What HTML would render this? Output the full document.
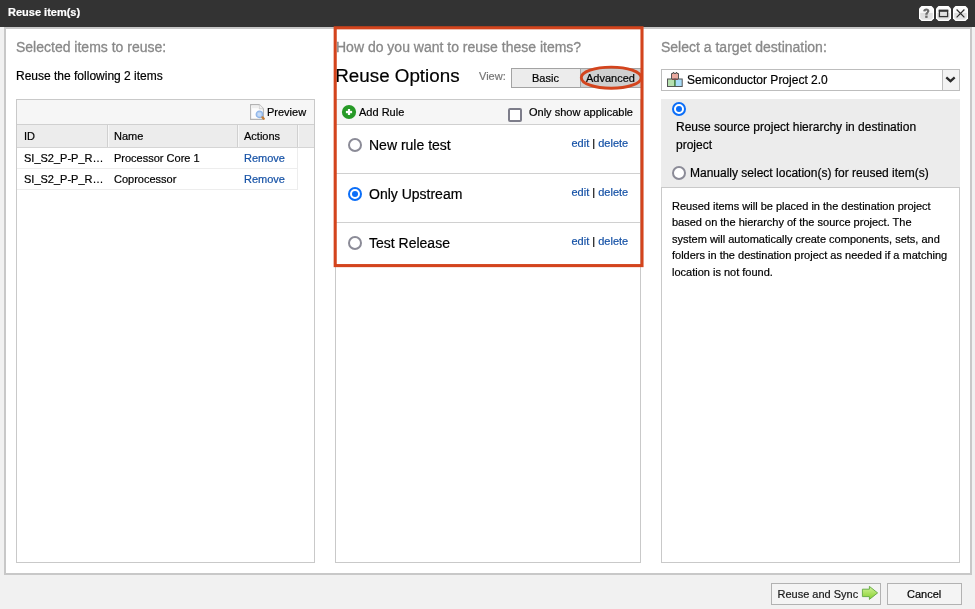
<!DOCTYPE html>
<html><head><meta charset="utf-8">
<style>
*{margin:0;padding:0;box-sizing:border-box}
html,body{-webkit-text-stroke:0.2px;width:975px;height:609px;overflow:hidden;-webkit-font-smoothing:antialiased;will-change:transform;background:#f1f1f1;font-family:"Liberation Sans",sans-serif;color:#000}
.a{position:absolute}
.t{position:absolute;white-space:nowrap;line-height:1}
#title{left:0;top:0;width:975px;height:27px;background:#333}
#outer{left:4px;top:27px;width:968px;height:548px;background:#fff;border:2px solid #c8c8c8}
.gray{color:#898989;-webkit-text-stroke:0.3px}
.panel{border:1px solid #c9c9c9;background:#fff}
.tb{background:#f6f6f6;border-bottom:1px solid #d0d0d0}
.lnk{color:#1652a6}
.radio{position:absolute;width:14px;height:14px;border-radius:50%;border:2px solid #8b8b97;background:#fff}
.radio.on{border:2px solid #0b6ef8}
.radio.on:after{content:"";position:absolute;left:2px;top:2px;width:6px;height:6px;border-radius:50%;background:#0b6ef8}
.tbtn{position:absolute;top:6px;width:15px;height:15px;background:linear-gradient(#fff 0,#fff 45%,#dcdcdc 55%,#e6e6e6 100%);border-radius:3px;border:1px solid #fff}
.btn{position:absolute;border:1px solid #b2b2b2;background:#f4f4f4}
</style></head><body>
<div id="title" class="a">
  <div class="t" style="left:8px;top:7px;font-size:11px;font-weight:bold;color:#fff">Reuse item(s)</div>
  <svg class="a" style="left:918px;top:5px" width="52" height="17" viewBox="0 0 52 17">
    <defs><linearGradient id="tg" x1="0" y1="0" x2="0" y2="1"><stop offset="0" stop-color="#fdfdfd"/><stop offset="0.42" stop-color="#f6f6f6"/><stop offset="0.5" stop-color="#dedede"/><stop offset="1" stop-color="#e4e4e4"/></linearGradient></defs>
    <g transform="translate(1,1)">
      <path d="M2.5 0H12.5L15 2.5V12.5L12.5 15H2.5L0 12.5V2.5Z" fill="#fff"/>
      <path d="M3 1.2H12L13.8 3V12L12 13.8H3L1.2 12V3Z" fill="url(#tg)"/>
      <path d="M4.2 5.3C4.2 3.4 5.7 2.5 7.3 2.5C9.1 2.5 10.4 3.5 10.4 5.1C10.4 6.9 8.6 7 8.6 8.8H6.2C6.2 6.3 8.1 6.2 8.1 5.2C8.1 4.7 7.8 4.4 7.3 4.4C6.8 4.4 6.5 4.8 6.5 5.5Z" fill="#6b6b6b"/>
      <rect x="6.2" y="9.6" width="2.4" height="2.3" fill="#6b6b6b"/>
    </g>
    <g transform="translate(18,1)">
      <path d="M2.5 0H12.5L15 2.5V12.5L12.5 15H2.5L0 12.5V2.5Z" fill="#fff"/>
      <path d="M3 1.2H12L13.8 3V12L12 13.8H3L1.2 12V3Z" fill="url(#tg)"/>
      <rect x="3.4" y="4.4" width="8.2" height="6.2" fill="#e0e0e0" stroke="#333" stroke-width="1.3"/>
      <rect x="2.8" y="3.8" width="9.4" height="2" fill="#333"/>
    </g>
    <g transform="translate(35,1)">
      <path d="M2.5 0H12.5L15 2.5V12.5L12.5 15H2.5L0 12.5V2.5Z" fill="#fff"/>
      <path d="M3 1.2H12L13.8 3V12L12 13.8H3L1.2 12V3Z" fill="url(#tg)"/>
      <path d="M3.6 3.5L11.4 11.3M11.4 3.5L3.6 11.3" stroke="#2a2a2a" stroke-width="1.2"/>
    </g>
  </svg>
</div>
<div id="outer" class="a"></div>

<!-- left column -->
<div class="t gray" style="left:16px;top:40px;font-size:14px">Selected items to reuse:</div>
<div class="t" style="left:16px;top:70px;font-size:12px">Reuse the following 2 items</div>
<div class="a panel" style="left:16px;top:99px;width:299px;height:464px">
  <div class="a tb" style="left:0;top:0;width:297px;height:25px"></div>
</div>
<div class="a" style="left:17px;top:125px;width:297px;height:23px;background:#ececec;border-bottom:1px solid #d5d5d5"></div>
<div class="a" style="left:107px;top:125px;width:1px;height:22px;background:#d0d0d0"></div>
<div class="a" style="left:237px;top:125px;width:1px;height:22px;background:#d0d0d0"></div>
<div class="a" style="left:297px;top:125px;width:1px;height:22px;background:#d0d0d0"></div>
<div class="a" style="left:108px;top:125px;width:1px;height:22px;background:#f7f7f7"></div>
<div class="a" style="left:238px;top:125px;width:1px;height:22px;background:#f7f7f7"></div>
<div class="a" style="left:298px;top:125px;width:1px;height:22px;background:#f7f7f7"></div>
<div class="t" style="left:24px;top:131px;font-size:11px">ID</div>
<div class="t" style="left:114px;top:131px;font-size:11px">Name</div>
<div class="t" style="left:244px;top:131px;font-size:11px">Actions</div>
<div class="a" style="left:17px;top:148px;width:281px;height:21px;border-bottom:1px solid #ededed;border-right:1px solid #ededed"></div>
<div class="a" style="left:17px;top:169px;width:281px;height:21px;border-bottom:1px solid #ededed;border-right:1px solid #ededed"></div>
<div class="t" style="left:24px;top:153px;font-size:11px">SI_S2_P-P_R…</div>
<div class="t" style="left:114px;top:153px;font-size:11px">Processor Core 1</div>
<div class="t lnk" style="left:244px;top:153px;font-size:11px">Remove</div>
<div class="t" style="left:24px;top:174px;font-size:11px">SI_S2_P-P_R…</div>
<div class="t" style="left:114px;top:174px;font-size:11px">Coprocessor</div>
<div class="t lnk" style="left:244px;top:174px;font-size:11px">Remove</div>
<svg class="a" style="left:249px;top:103px" width="17" height="18" viewBox="0 0 17 18"><path d="M1.6 1.6H10.2L14.4 5.8V16.4H1.6Z" fill="#fdfdfd" stroke="#b3b3b3" stroke-width="1.1"/><path d="M10.2 1.6V5.8H14.4" fill="#f0f0f0" stroke="#c8c8c8" stroke-width="0.8"/><rect x="3" y="3" width="6" height="2.2" fill="#eeeeee"/><circle cx="10.4" cy="11.4" r="3.2" fill="#b3cff3" stroke="#8fb5e8" stroke-width="1.2"/><rect x="9" y="10" width="2.8" height="2.8" fill="#c9dcf6"/><path d="M13.4 14.4L14.8 15.8" stroke="#c27c36" stroke-width="2.2" stroke-linecap="round"/></svg>
<div class="t" style="left:267px;top:107px;font-size:11px">Preview</div>

<!-- middle column -->
<div class="t gray" style="left:336px;top:40px;font-size:14px">How do you want to reuse these items?</div>
<div class="t" style="left:335.3px;top:66.6px;font-size:18.8px">Reuse Options</div>
<div class="t" style="left:479px;top:71px;font-size:11px;color:#777">View:</div>
<div class="btn" style="left:511px;top:68px;width:70px;height:20px;background:#ececec;border-color:#a3a3a3"></div>
<div class="btn" style="left:580px;top:68px;width:63px;height:20px;background:#cfcfcf;border-color:#a3a3a3"></div>
<div class="t" style="left:532px;top:73px;font-size:11px">Basic</div>
<div class="t" style="left:586px;top:73px;font-size:11px">Advanced</div>
<div class="a panel" style="left:335px;top:99px;width:306px;height:464px">
  <div class="a tb" style="left:0;top:0;width:304px;height:25px"></div>
  <div class="a" style="left:0;top:73px;width:304px;height:1px;background:#d0d0d0"></div>
  <div class="a" style="left:0;top:122px;width:304px;height:1px;background:#d0d0d0"></div>
</div>
<svg class="a" style="left:341px;top:104px" width="16" height="16" viewBox="0 0 16 16"><circle cx="8" cy="8" r="7.1" fill="#279a27"/><rect x="4.9" y="6.9" width="6.2" height="2.3" fill="#fff"/><rect x="6.9" y="5" width="2.2" height="6" fill="#fff"/></svg>
<div class="t" style="left:359px;top:107px;font-size:11px">Add Rule</div>
<div class="a" style="left:508px;top:108px;width:14px;height:14px;border:2px solid #7d7d8a;border-radius:2px;background:#fff"></div>
<div class="t" style="left:529px;top:107px;font-size:11px">Only show applicable</div>
<div class="radio" style="left:348px;top:138px"></div>
<div class="t" style="left:369px;top:138px;font-size:14px">New rule test</div>
<div class="t lnk" style="left:571.5px;top:138px;font-size:11px">edit <span style="color:#000">|</span> delete</div>
<div class="radio on" style="left:348px;top:187px"></div>
<div class="t" style="left:369px;top:187px;font-size:14px">Only Upstream</div>
<div class="t lnk" style="left:571.5px;top:187px;font-size:11px">edit <span style="color:#000">|</span> delete</div>
<div class="radio" style="left:348px;top:236px"></div>
<div class="t" style="left:369px;top:236px;font-size:14px">Test Release</div>
<div class="t lnk" style="left:571.5px;top:236px;font-size:11px">edit <span style="color:#000">|</span> delete</div>

<!-- right column -->
<div class="t gray" style="left:661px;top:40px;font-size:14px">Select a target destination:</div>
<div class="a" style="left:661px;top:69px;width:299px;height:22px;border:1px solid #bdbdbd;background:#fff"></div>
<div class="a" style="left:942px;top:70px;width:17px;height:20px;border-left:1px solid #bdbdbd;background:#f3f3f3"></div>
<svg class="a" style="left:666px;top:71px" width="18" height="17" viewBox="0 0 18 17"><path d="M5.5 2.5H7V1.5H8V2.5H10V1.5H11V2.5H12.5V8.5H5.5Z" fill="#eaa99f" stroke="#555" stroke-width="1"/><rect x="1.5" y="8" width="7.5" height="7.5" fill="#b6e0b0" stroke="#555" stroke-width="1"/><rect x="9" y="8" width="7.2" height="7.5" fill="#a8dcf8" stroke="#555" stroke-width="1"/><rect x="8.4" y="8.5" width="1" height="6.5" fill="#3d9a3d"/><rect x="6" y="8" width="6" height="1" fill="#7a4a4a"/></svg>
<svg class="a" style="left:943px;top:70px" width="16" height="20" viewBox="0 0 16 20"><path d="M3.3 7.4L7.5 11.1L11.7 7.4" fill="none" stroke="#2a2a2a" stroke-width="2.3"/></svg>
<div class="t" style="left:687px;top:74px;font-size:12px">Semiconductor Project 2.0</div>
<div class="a" style="left:661px;top:99px;width:299px;height:89px;background:#ececec"></div>
<div class="radio on" style="left:672px;top:102px"></div>
<div class="t" style="left:676px;top:121px;font-size:12px">Reuse source project hierarchy in destination</div>
<div class="t" style="left:676px;top:139px;font-size:12px">project</div>
<div class="radio" style="left:672px;top:166px"></div>
<div class="t" style="left:690px;top:167px;font-size:12px">Manually select location(s) for reused item(s)</div>
<div class="a panel" style="left:661px;top:187px;width:299px;height:376px"></div>
<div class="t" style="left:672px;top:198px;font-size:11px;line-height:16.4px;white-space:normal;width:280px">Reused items will be placed in the destination project<br>based on the hierarchy of the source project. The<br>system will automatically create components, sets, and<br>folders in the destination project as needed if a matching<br>location is not found.</div>

<!-- bottom buttons -->
<div class="btn" style="left:771px;top:583px;width:110px;height:22px"></div>
<div class="t" style="left:777.5px;top:589px;font-size:11px;color:#1a1a1a">Reuse and Sync</div>
<svg class="a" style="left:860px;top:584px" width="20" height="18" viewBox="0 0 20 18"><defs><linearGradient id="ag" x1="0" y1="0" x2="0" y2="1"><stop offset="0" stop-color="#d2f59a"/><stop offset="1" stop-color="#86cf2c"/></linearGradient></defs><path d="M2.4 5.2H9.4V2.4L17.6 8.9L9.4 15.4V12.6H2.4Z" fill="url(#ag)" stroke="#6cae4a" stroke-width="1"/></svg>
<div class="btn" style="left:887px;top:583px;width:75px;height:22px"></div>
<div class="t" style="left:907px;top:589px;font-size:11px">Cancel</div>

<!-- annotation -->
<svg class="a" style="left:0;top:0" width="975" height="609" viewBox="0 0 975 609"><rect x="335.2" y="27.8" width="306.8" height="237.8" fill="none" stroke="#d3441d" stroke-width="3.1"/><ellipse cx="611.2" cy="77.7" rx="29.9" ry="10.6" fill="none" stroke="#d3441d" stroke-width="2.9"/></svg>
</body></html>
